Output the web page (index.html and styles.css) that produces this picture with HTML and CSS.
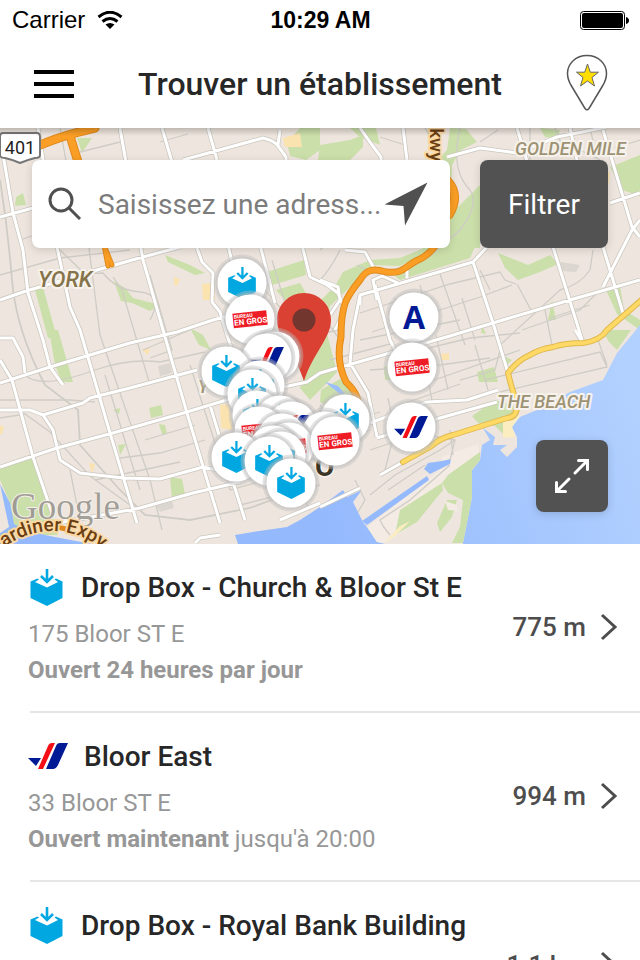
FILE: index.html
```html
<!DOCTYPE html>
<html lang="fr">

<head>
    <meta charset="UTF-8">
    <meta name="viewport" content="width=device-width, initial-scale=1.0">
    <title>Trouver un établissement</title>
    <link rel="stylesheet" href="styles.css">
</head>

<body>
    <!-- Shared icons -->
    <svg class="sprite" aria-hidden="true">
        <symbol id="icon-box" viewBox="0 0 32 37">
            <path d="M0 12.500 7 9.500 8.500 10.500 4.500 13 16.500 18.500 27.500 13 24 10.500 25.500 9.500 32 12.500V29L16.500 37 0 29Z" fill="#00a7e1" />
            <path d="M16.500 0V12.500M10.500 7 16.500 13 22.500 7" fill="none" stroke="#00a7e1" stroke-width="2.600" />
        </symbol>
        <symbol id="icon-post" viewBox="0 0 40 26">
            <path d="M0 15H13L8 23Z" fill="#001a96" />
            <path d="M24 0H27L15 26H10L20 3Q21 0 24 0Z" fill="#f40f16" />
            <path d="M32 0H40L30 22Q28 26 25 26H18L28 3Q29 0 32 0Z" fill="#001a96" />
        </symbol>
    </svg>

    <div class="app">
        <header>
            <div class="status-bar">
                <div class="carrier">
                    <span>Carrier</span>
                    <svg width="26" height="19" viewBox="0 0 26 19">
                        <path d="M1.500 6Q13-3.500 24.500 6M5.500 10.500Q13 4.500 20.500 10.500" fill="none" stroke="#000" stroke-width="3" />
                        <path d="M8.500 13.500Q13 10.500 17.500 13.500L13 18Z" />
                    </svg>
                </div>
                <span class="clock">10:29 AM</span>
                <svg class="battery" width="49" height="19" viewBox="0 0 49 19">
                    <rect x=".5" y=".5" width="44" height="18" rx="3" fill="none" stroke="#000" />
                    <rect x="2" y="2" width="41" height="15" rx="2" />
                    <path d="M46 6Q49 7 49 9.500 49 12 46 13Z" />
                </svg>
            </div>
            <div class="nav-bar">
                <button class="menu-button" aria-label="Menu"><span></span><span></span><span></span></button>
                <h1>Trouver un établissement</h1>
                <button class="favorites-button" aria-label="Favoris">
                    <svg width="42" height="60" viewBox="0 0 42 60">
                        <path d="M21 1.500C10 1.500 1.500 9.500 1.500 19.500 1.500 24 3 28 5.500 32L19 54.500Q21 57 23 54.500L36.500 32C39 28 40.500 24 40.500 19.500 40.500 9.500 32 1.500 21 1.500Z" fill="#fff" stroke="#555" stroke-width="1.500" />
                        <path d="M21.500 10 24.300 18.200H32.500L26 23.500 28.500 32 21.500 27 14.500 32 17 23.500 10.500 18.200H18.700Z" fill="#ffde00" stroke="#666" />
                    </svg>
                </button>
            </div>
        </header>

        <section class="map" aria-label="Carte">
            <svg class="map-canvas" viewBox="0 128 640 416" preserveAspectRatio="xMidYMid slice">
                <defs>
                    <linearGradient id="water" x1="320" y1="520" x2="640" y2="400" gradientUnits="userSpaceOnUse">
                        <stop offset="0" stop-color="#94b9fd" />
                        <stop offset="1" stop-color="#b2d1ff" />
                    </linearGradient>
                    <linearGradient id="top-shadow" x1="0" y1="0" x2="0" y2="1">
                        <stop offset="0" stop-color="#000" stop-opacity=".2" />
                        <stop offset="1" stop-color="#000" stop-opacity="0" />
                    </linearGradient>
                    <g id="disc">
                        <circle r="28.500" fill="#bbb" fill-opacity=".4" />
                        <circle r="26.500" fill="#bbb" fill-opacity=".4" />
                        <circle r="24.500" fill="#fff" />
                    </g>
                    <g id="pin-box">
                        <use href="#disc" />
                        <use href="#icon-box" x="-14" y="-16" width="28" height="32" />
                    </g>
                    <g id="pin-post">
                        <use href="#disc" />
                        <use href="#icon-post" x="-17" y="-11" width="34" height="22" />
                    </g>
                    <g id="pin-bureau">
                        <use href="#disc" />
                        <g transform="rotate(-6)">
                            <rect x="-17" y="-7" width="34" height="14.500" fill="#ee1c25" />
                            <text class="bureau-small" x="-16" y="-2">BUREAU</text>
                            <text class="bureau-big" x="-16" y="5">EN GROS</text>
                        </g>
                    </g>
                    <path id="gardiner" d="M-6 555Q22 531 52 531 84 531 110 556" />
                    <path id="parkway" d="M436 245Q428 256 416 261C404 267 404 274 386 272 372 268 366 270 360 280 346 297 341 305 341 337 337 355 340 370 346 382 357 392 359 400 360 415 358 432 366 442L380 462Q383 472 379 477 374 481 353 482 335 491 320 493 300 500 290 507 275 518 263 520 248 528 233 528H180L143 545" />
                    <path id="kingston" d="M645 297 607 330Q600 341 583 343 565 343 553 347 540 349 530 355 518 360 508 373 512 390 517 403 518 417 507 418L453 435Q440 438 430 447L403 462" />
                </defs>

                <rect y="128" width="640" height="416" fill="#eee6de" />

                <!-- Parks -->
                <g fill="#cbdfaa">
                    <path d="M0 467 35 458 52 513 58 535H14L10 503 0 480Z" />
                    <path d="M35 290 43 287 57 338H48ZM49 330H58L73 382 62 382 55 365Z" />
                    <path d="M16 197 23 193 26 205 15 206ZM77 138H92L82 153ZM114 281 125 288 133 298 160 305 150 311 132 303 121 301Z" />
                    <path d="M149 408 161 405 163 415 151 418ZM118 445 126 444 120 455ZM170 477 182 479 185 494 172 500ZM159 424 165 425 167 434H162ZM113 410 120 408 119 414ZM190 328 203 335 211 350 199 345Z" />
                    <path d="M267 272 304 260 306 275 269 286ZM276 290 300 283 310 300 290 306ZM165 255 190 265 205 273 195 275 168 262Z" />
                    <path d="M287 143 300 128H320V150L306 160 290 156ZM320 145 350 140 363 135V147L350 160H318Z" />
                    <path d="M350 128H376L380 145 360 137ZM450 128 466 129 477 142 461 150 452 165 450 215 480 185V248H436L400 266 372 265 345 292 330 306 321 300 335 286 343 272 370 260 400 258 422 249 Q430 240 440 225L437 160 447 150Z" />
                    <path d="M430 247H475L470 258 400 280 395 276 425 260ZM498 253 528 265 550 255 558 264 540 272 518 280 505 268ZM610 167 640 155V196L622 190ZM540 128 560 130 558 139 545 137ZM606 290 620 286 624 310 640 320V330L617 314Z" />
                    <path d="M310 302 330 305 326 330 337 372 328 382 310 400 300 388 310 360ZM321 390 340 379 354 388 354 402 340 412 320 402Z" />
                    <path d="M602 330H631L617 350 609 342ZM500 354 512 360 507 365ZM477 372 494 367 498 382 479 382ZM384 367 392 364 392 380 385 380ZM552 300 556 320 548 320ZM482 325 486 334 481 333ZM472 416 495 400 518 407 508 420 503 434 495 426 478 423Z" />
                </g>
                <g fill="#fbe3b0">
                    <path d="M283 138 300 133 302 147 285 147ZM202 284 214 283 215 300 203 300ZM220 405 229 404 233 430 221 428ZM89 463 95 464 92 474ZM142 350 150 348 148 355Z" />
                    <path d="M174 277 180 279 177 286 174 285ZM441 354 449 353 449 360 442 360ZM0 425 4 427 2 434 0 434ZM604 174 610 172 609 184 604 182Z" />
                </g>
                <path d="M158 366 170 363 172 373 160 376ZM156 505 172 500 174 508 160 512ZM560 262 580 265 576 272 562 271Z" fill="#dcd6d0" />

                <!-- Water -->
                <g fill="url(#water)">
                    <path d="M640 325 617 353 603 380 570 392 537 410 520 417 512 427 517 437 517 447 507 457 500 450 507 445 493 445 495 437 483 428 490 440 482 445 480 460 472 470 472 497 463 543V544H385L377 542 367 527 363 522 358 512 353 502 362 490 347 497 343 490 320 507 300 520 287 527 253 532 235 535 238 544H640Z" />
                    <path d="M0 484 10 503 14 524 30 532 60 538 92 544H0V533L9 527Z" />
                    <path d="M325 382 338 386 345 394 340 394Z" />
                </g>
                <!-- Port and islands -->
                <path d="M367 527 445 466 441 457 478 444 480 460 472 470 448 493 442 483 417 522 385 543 377 542Z" fill="#f3ebe4" />
                <path d="M448 475 480 452 480 460 472 470 472 497 463 543H452L460 527 463 500 448 493 442 483ZM400 510 442 483 443 490 417 522 395 535ZM447 500 457 500 452 517 440 532 437 523Z" fill="#cbdfaa" />
                <path d="M445 501 448 510 458 511 457 505Z" fill="#f3ebe4" />
                <path d="M362 521 427 476 429 480 367 525ZM424 469 428 463 442 461 451 459 450 464 430 474Z" fill="#94b9fd" />
                <path d="M503 420 520 415 512 427 515 437 503 438ZM384 543 400 526 410 521 395 536Z" fill="#fbedc0" />

                <!-- Minor streets -->
                <g fill="none" stroke="#cfccc6" stroke-width="1.300">
                    <path d="M0 180Q8 230 12 280T45 385L78 410 80 445 120 490 145 515 190 520 250 508 285 495" stroke-width="1.800" />
                    <path d="M0 400H70L95 402M0 418 25 414 50 432 90 476 130 505M0 275 60 258 130 250M20 240 52 229M80 152 120 142" />
                    <path d="M60 250 85 274 103 273 Q116 290 140 292T150 320M88 240 100 335 150 480M113 277 122 290 150 385" />
                    <path d="M105 375 140 490M25 375Q40 390 95 370 130 358 160 362L205 352M143 350 190 330M145 440 195 425M120 458 160 453 205 440M95 480 180 462M70 470 80 520M150 480 162 530M190 365 230 490" />
                    <path d="M60 128 75 210M160 142 188 134M180 215 225 205M150 275 172 350 150 358M230 250 250 330M240 262 300 330M272 260 290 320M285 340 340 330M330 360 390 344M322 315 340 340" />
                    <path d="M320 250 345 228 370 190M340 250Q330 270 320 280M357 265Q380 280 430 256L460 230 Q480 205 470 190 450 170 460 128" />
                    <path d="M498 130 480 142M530 128V160M560 140 600 160M593 250 590 270Q580 285 560 290L500 345M600 290 580 310 522 330M590 305 550 318" />
                    <path d="M360 313 450 284 500 272 505 280 516 284M372 332 480 297 512 285M360 340 460 320M440 274 465 345M462 298 475 340M420 285 425 305M517 284 532 312M545 310 553 350" />
                    <path d="M400 355 470 338 520 333M370 370 440 365 490 358M420 385 520 350M436 335 448 390M420 340 432 400M475 345 488 390M460 380 495 370 500 350M400 405 460 384M388 398 395 430 385 470M370 450 400 440 430 432M485 380 600 352 607 367 500 392M598 340 607 365" />
                    <path d="M355 480 365 500 358 512M370 495 395 475 440 450 455 440M388 490 425 465M384 528 380 520 410 500 450 465M383 526 390 535M400 430 455 440 450 460M450 430 453 455M230 490 300 470M240 505 320 485M300 490 310 510M320 445 370 430M335 425 380 412" />
                    <path d="M380 137 405 145M425 128 435 145M555 128 564 150M590 128 597 158M615 148 640 140M480 270 490 290M395 298 403 330M320 405 330 420 340 450" />
                </g>

                <!-- Main streets -->
                <g fill="none" stroke-linejoin="round">
                    <path id="streets" class="streets" d="M0 217 95 191M183 160 263 138Q275 141 278 146L286 157V163M0 300 23 292 90 272 143 257 180 247M0 383 50 367 130 343 177 332 213 320 250 310M0 410H30L43 415 83 403 90 398 130 388 197 370M43 415 53 430 60 460 80 473 123 478 160 479 203 467 217 470M0 467 57 448 113 433 187 412 233 398 307 382 320 373 390 353 443 338 493 323 570 300 640 280M20 530 140 508 193 493 240 482M0 137 13 213 23 250 28 293 43 340 50 367 63 385M0 338H13L23 357 25 373M0 360 12 380 33 457 52 513M38 128 57 247 70 307 80 330 110 433 137 523M120 128 143 260 163 330 187 413 220 523M162 128 172 162M197 248 202 262 213 273 212 302 220 312 227 335 232 350M228 245 232 262M208 128 217 160M260 245 275 303M280 130 278 145M210 405 219 435M233 482 245 520M302 245 310 277 327 285 338 293 345 310 335 330M360 128 372 145 381 157V165M403 128 407 160M360 305V295L473 262 487 247M610 203 640 193M447 157 480 148 517 153 557 137 607 127M473 262 493 323 508 373M517 128 553 247 583 343M570 128 577 160M603 130 632 227 640 237M603 247 623 313M640 220 632 230 603 287M360 295 353 330 350 363 368 393 377 437M377 300 373 280 382 276 398 283M375 285 390 340 400 360M345 250 365 252 375 270M407 265V278M320 280 338 287 340 300 330 315M370 423 427 402 467 400 498 390M377 438 440 418 497 402M320 507 360 488M280 520 320 503M195 543 200 538 220 535M575 330 583 343M403 462 380 475" stroke="#cbc7bf" stroke-width="4.500" />
                    <path class="streets-fill" d="M0 217 95 191M183 160 263 138Q275 141 278 146L286 157V163M0 300 23 292 90 272 143 257 180 247M0 383 50 367 130 343 177 332 213 320 250 310M0 410H30L43 415 83 403 90 398 130 388 197 370M43 415 53 430 60 460 80 473 123 478 160 479 203 467 217 470M0 467 57 448 113 433 187 412 233 398 307 382 320 373 390 353 443 338 493 323 570 300 640 280M20 530 140 508 193 493 240 482M0 137 13 213 23 250 28 293 43 340 50 367 63 385M0 338H13L23 357 25 373M0 360 12 380 33 457 52 513M38 128 57 247 70 307 80 330 110 433 137 523M120 128 143 260 163 330 187 413 220 523M162 128 172 162M197 248 202 262 213 273 212 302 220 312 227 335 232 350M228 245 232 262M208 128 217 160M260 245 275 303M280 130 278 145M210 405 219 435M233 482 245 520M302 245 310 277 327 285 338 293 345 310 335 330M360 128 372 145 381 157V165M403 128 407 160M360 305V295L473 262 487 247M610 203 640 193M447 157 480 148 517 153 557 137 607 127M473 262 493 323 508 373M517 128 553 247 583 343M570 128 577 160M603 130 632 227 640 237M603 247 623 313M640 220 632 230 603 287M360 295 353 330 350 363 368 393 377 437M377 300 373 280 382 276 398 283M375 285 390 340 400 360M345 250 365 252 375 270M407 265V278M320 280 338 287 340 300 330 315M370 423 427 402 467 400 498 390M377 438 440 418 497 402M320 507 360 488M280 520 320 503M195 543 200 538 220 535M575 330 583 343M403 462 380 475" />
                </g>

                <!-- Highways -->
                <g fill="none" stroke-linecap="round" stroke-linejoin="round">
                    <use href="#kingston" stroke="#dfb850" stroke-width="6" />
                    <use href="#kingston" stroke="#ffd965" stroke-width="4" />
                    <g stroke="#e08a1c" stroke-width="7">
                        <use href="#parkway" />
                        <path d="M447 180Q461 195 449 215M70 136 78 162" stroke-width="9" />
                        <path d="M38 146Q60 136 95 128" stroke-width="9" />
                        <path d="M104 245 108 266M104 245 112 265M20 533Q45 522 70 530" stroke-width="5" />
                    </g>
                    <g stroke="#fa9e25" stroke-width="5">
                        <use href="#parkway" />
                        <path d="M447 180Q461 195 449 215M70 136 78 162M38 146Q60 136 95 128" stroke-width="7" />
                        <path d="M104 245 108 266M104 245 112 265" stroke-width="3" />
                    </g>
                </g>

                <!-- Labels -->
                <path d="M3 133H37Q40 133 40 137V155Q40 158 35 158 27 160 20 163 14 160 5 158 0 158 0 155V137Q0 133 3 133Z" fill="#fff" stroke="#777" stroke-width="2" />
                <text class="route" x="20" y="154" text-anchor="middle">401</text>
                <text class="area" x="38" y="287">YORK</text>
                <text class="area area-small area-pale" x="515" y="155">GOLDEN MILE</text>
                <text class="area area-small area-pale" x="497" y="408">THE BEACH</text>
                <text class="area area-small area-pale" x="198" y="393">Y</text>
                <text class="city" x="315" y="476">O</text>
                <text class="highway" transform="translate(430 116) rotate(90)">Pkwy</text>
                <text class="google" x="11" y="519">Google</text>
                <text class="highway"><textPath href="#gardiner">Gardiner Expy</textPath></text>

                <!-- Current position -->
                <g>
                    <path d="M304 293C289 293 277 305 277 320 277 338 295 353 304 381 313 353 331 338 331 320 331 305 319 293 304 293Z" fill="#db4132" />
                    <circle cx="304" cy="320" r="11.500" fill="#73362f" />
                </g>

                <!-- Locations -->
                <g>
                    <use href="#pin-box" x="242" y="283" />
                    <use href="#pin-bureau" x="250" y="319" />
                    <use href="#disc" x="275" y="356" />
                    <use href="#pin-post" x="267" y="358" />
                    <use href="#pin-box" x="226" y="371" />
                    <use href="#pin-box" x="260" y="385" />
                    <use href="#pin-box" x="252" y="394" />
                    <use href="#pin-box" x="257" y="415" />
                    <use href="#pin-box" x="280" y="420" />
                    <use href="#pin-post" x="292" y="426" />
                    <use href="#pin-bureau" x="259" y="431" />
                    <use href="#pin-box" x="345" y="419" />
                    <use href="#disc" x="325" y="436" />
                    <use href="#disc" x="282" y="438" />
                    <use href="#pin-bureau" x="289" y="447" />
                    <use href="#pin-bureau" x="335" y="441" />
                    <use href="#pin-box" x="273" y="450" />
                    <use href="#pin-box" x="281" y="456" />
                    <use href="#pin-box" x="236" y="457" />
                    <use href="#pin-box" x="269" y="461" />
                    <use href="#pin-box" x="291" y="483" />
                    <use href="#disc" x="414" y="317" />
                    <text class="pin-letter" x="414" y="329" text-anchor="middle">A</text>
                    <use href="#pin-bureau" x="412" y="367" />
                    <use href="#pin-post" x="411" y="427" />
                </g>
                <rect y="128" width="640" height="8" fill="url(#top-shadow)" />
            </svg>

            <div class="map-tools">
                <form class="search">
                    <label for="address" aria-label="Adresse">
                        <svg width="34" height="34" viewBox="0 0 34 34" fill="none" stroke="#505050" stroke-width="3">
                            <circle cx="13" cy="13" r="11" />
                            <path d="M21 21 32 32" />
                        </svg>
                    </label>
                    <input type="text" id="address" placeholder="Saisissez une adress...">
                    <button type="button" class="locate-button" aria-label="Me localiser">
                        <svg width="44" height="44" viewBox="0 0 44 44">
                            <path d="M43.500 .5 21 43.500 19.500 24 .5 22.500Z" fill="#505050" />
                        </svg>
                    </button>
                </form>
                <button class="filter-button">Filtrer</button>
            </div>

            <button class="expand-button" aria-label="Agrandir la carte">
                <svg width="36" height="36" viewBox="0 0 36 36" fill="none" stroke="#fff" stroke-width="3">
                    <path d="M21 15 33 3M24.500 2.500H33.500V11.500M15 21 3 33M2.500 24.500V33.500H11.500" stroke-linecap="round" />
                </svg>
            </button>
        </section>

        <ul class="locations">
            <li>
                <a href="#">
                    <div class="details">
                        <h2><svg class="icon-box"><use href="#icon-box" /></svg>Drop Box - Church &amp; Bloor St E</h2>
                        <p>175 Bloor ST E</p>
                        <p><strong>Ouvert 24 heures par jour</strong></p>
                    </div>
                    <span class="distance">775 m</span>
                    <svg class="chevron" viewBox="0 0 18 28"><path d="M2 2 15 14 2 26" /></svg>
                </a>
            </li>
            <li>
                <a href="#">
                    <div class="details">
                        <h2><svg class="icon-post"><use href="#icon-post" /></svg>Bloor East</h2>
                        <p>33 Bloor ST E</p>
                        <p><strong>Ouvert maintenant</strong> jusqu'à 20:00</p>
                    </div>
                    <span class="distance">994 m</span>
                    <svg class="chevron" viewBox="0 0 18 28"><path d="M2 2 15 14 2 26" /></svg>
                </a>
            </li>
            <li>
                <a href="#">
                    <div class="details">
                        <h2><svg class="icon-box"><use href="#icon-box" /></svg>Drop Box - Royal Bank Building</h2>
                    </div>
                    <span class="distance">1.1 km</span>
                    <svg class="chevron" viewBox="0 0 18 28"><path d="M2 2 15 14 2 26" /></svg>
                </a>
            </li>
        </ul>
    </div>
</body>

</html>
```
FILE: styles.css
```css
* {
    box-sizing: border-box;
}

body {
    font-family: Roboto, sans-serif;
    margin: 0;
    background-color: #fff;
    color: #272727;
}

h1,
h2,
p,
ul {
    margin: 0;
    padding: 0;
}

button {
    border: none;
    padding: 0;
    background: none;
    font-family: inherit;
    cursor: pointer;
}

svg {
    display: block;
    flex: none;
}

.sprite {
    position: absolute;
    width: 0;
    height: 0;
}

.app {
    display: flex;
    flex-direction: column;
    height: 100vh;
    overflow: hidden;
}

/* Header */
.status-bar {
    display: grid;
    grid-template-columns: 1fr auto 1fr;
    align-items: center;
    height: 40px;
    padding: 0 11px 0 12px;
    font-family: "Liberation Sans", Arial, sans-serif;
    font-size: 24px;
    color: #000;
}

.carrier {
    display: flex;
    align-items: center;
    gap: 12px;
}

.clock {
    font-size: 23px;
    font-weight: bold;
}

.battery {
    justify-self: end;
}

.nav-bar {
    display: flex;
    align-items: center;
    justify-content: space-between;
    height: 88px;
    padding: 0 32px 0 34px;
}

.menu-button {
    display: flex;
    flex-direction: column;
    gap: 8px;
    width: 40px;
}

.menu-button span {
    height: 4px;
    background-color: #000;
}

.nav-bar h1 {
    font-size: 32px;
    font-weight: 500;
}

/* Map */
.map {
    position: relative;
    flex: none;
    aspect-ratio: 20 / 13;
    overflow: hidden;
}

.map-canvas {
    width: 100%;
    height: 100%;
}

.streets-fill {
    stroke: #fff;
    stroke-width: 3px;
}

.map-canvas text {
    paint-order: stroke;
    stroke-linejoin: round;
}

.area {
    font-size: 22px;
    font-style: italic;
    font-weight: 500;
    fill: #857349;
    stroke: #f7f2ec;
    stroke-width: 4px;
}

.area-small {
    font-size: 18px;
}

.area-pale {
    fill: #9d9274;
}

.route {
    font-size: 18px;
    fill: #222;
}

.city {
    font-size: 28px;
    font-weight: bold;
    fill: #3b3525;
    stroke: #f7f2ec;
    stroke-width: 3px;
}

.highway {
    font-size: 19px;
    font-weight: 500;
    fill: #6b3e12;
    stroke: #fbd9a4;
    stroke-width: 4px;
}

.google {
    font-family: "Liberation Serif", serif;
    font-size: 37px;
    fill: #8c8983;
    fill-opacity: 0.8;
    stroke: #f5f0ea;
    stroke-width: 2px;
}

.bureau-small {
    font-size: 5px;
    font-weight: bold;
    fill: #fff;
}

.bureau-big {
    font-size: 8px;
    font-weight: bold;
    fill: #fff;
}

.pin-letter {
    font-family: "Open Sans", sans-serif;
    font-size: 32px;
    font-weight: bold;
    fill: #001a96;
}

.map-tools {
    position: absolute;
    top: 32px;
    left: 32px;
    right: 32px;
    display: flex;
    gap: 30px;
}

.search {
    flex: 1;
    display: flex;
    align-items: center;
    min-width: 0;
    height: 88px;
    padding: 0 22px 0 16px;
    background-color: #fff;
    border-radius: 8px;
    box-shadow: 0 2px 8px rgba(0, 0, 0, 0.15);
}

.search input {
    flex: 1;
    min-width: 0;
    border: none;
    outline: none;
    padding: 0 0 0 16px;
    background: none;
    font-family: inherit;
    font-size: 28px;
    color: #505050;
}

.search input::placeholder {
    color: #7c7c7c;
    opacity: 1;
}

.filter-button,
.expand-button {
    background-color: #525252;
    border-radius: 8px;
    color: #fff;
    box-shadow: 0 2px 8px rgba(0, 0, 0, 0.15);
}

.filter-button {
    width: 128px;
    height: 88px;
    font-size: 28px;
}

.expand-button {
    position: absolute;
    right: 32px;
    bottom: 32px;
    display: flex;
    align-items: center;
    justify-content: center;
    width: 72px;
    height: 72px;
}

/* Location list */
.locations {
    flex: 1;
    min-height: 0;
    overflow: hidden;
    list-style: none;
}

.locations li::after {
    content: "";
    display: block;
    height: 2px;
    margin-left: 30px;
    background-color: #e6e6e6;
}

.locations a {
    display: flex;
    align-items: center;
    min-height: 167px;
    padding: 0 22px 2px 28px;
    color: inherit;
    text-decoration: none;
}

.details {
    flex: 1;
    align-self: flex-start;
    min-width: 0;
    padding-top: 14px;
}

.details h2 {
    display: flex;
    align-items: center;
    gap: 16px;
    height: 58px;
    font-size: 28px;
    font-weight: 500;
    white-space: nowrap;
}

.details p {
    font-size: 24px;
    line-height: 36px;
    color: #979797;
}

.icon-box {
    width: 37px;
    height: 37px;
}

.icon-post {
    width: 40px;
    height: 26px;
}

.distance {
    font-size: 26px;
    font-weight: 500;
    color: #4d4d4d;
}

.chevron {
    width: 18px;
    height: 28px;
    margin-left: 14px;
    fill: none;
    stroke: #4d4d4d;
    stroke-width: 3px;
}
```
